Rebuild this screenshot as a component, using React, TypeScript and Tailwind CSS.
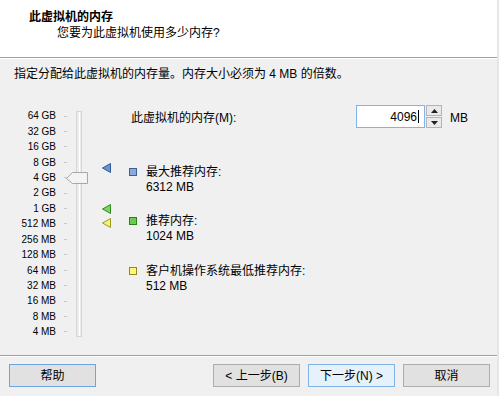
import React from "react";

const FONT = { fontFamily: '"Liberation Sans", "Noto Sans CJK SC", sans-serif' };

const scale = ["64 GB", "32 GB", "16 GB", "8 GB", "4 GB", "2 GB", "1 GB", "512 MB", "256 MB", "128 MB", "64 MB", "32 MB", "16 MB", "8 MB", "4 MB"];

function Tri({ fill, stroke, top }: { fill: string; stroke: string; top: number }) {
  return (
    <svg className="absolute left-[102px]" style={{ top }} width="10" height="10" viewBox="0 0 10 10">
      <polygon points="0.5,5 8.5,0.5 8.5,9.5" fill={fill} stroke={stroke} strokeWidth="1" />
    </svg>
  );
}

function Btn({ children, variant }: { children: React.ReactNode; variant?: "focus" | "hover" }) {
  const cls =
    variant === "hover"
      ? "border-[#7eb4ea] bg-[#e5f1fb]"
      : variant === "focus"
      ? "border-[#6fa4e0] bg-[#e1e1e1]"
      : "border-[#adadad] bg-[#e1e1e1]";
  return (
    <div className={`w-[87px] h-[23px] border ${cls} flex items-center justify-center text-[12px] text-black`}>
      {children}
    </div>
  );
}

function Legend({ color, border, title, value }: { color: string; border: string; title: string; value: string }) {
  return (
    <div className="flex">
      <div className="w-[17px] pt-[3px]">
        <div className="w-[8px] h-[8px] border" style={{ background: color, borderColor: border }} />
      </div>
      <div className="leading-[15px] text-[12px]">
        <div>{title}</div>
        <div>{value}</div>
      </div>
    </div>
  );
}

export default function App() {
  return (
    <div className="w-[499px] h-[396px] bg-[#f0f0f0] flex flex-col text-black border-r-2 border-r-[#e6e6e6]" style={FONT}>
      <div className="h-[58px] bg-white border-b border-[#a0a0a0] shrink-0">
        <div className="pl-[29px] pt-[9px] text-[12px] font-bold leading-[16px]">此虚拟机的内存</div>
        <div className="pl-[57px] pt-[0px] text-[12px] leading-[16px]">您要为此虚拟机使用多少内存?</div>
      </div>
      <div className="flex-1 border-t border-white">
        <div className="pl-[14px] pt-[7px] text-[12px] leading-[16px]">指定分配给此虚拟机的内存量。内存大小必须为 4 MB 的倍数。</div>
        <div className="flex mt-[23px]">
          <div className="relative w-[129px] h-[240px] flex">
            <div className="w-[56px] pt-[3.3px] text-right text-[10px]">
              {scale.map((s) => (
                <div key={s} className="h-[15.43px] leading-[15.43px]">{s}</div>
              ))}
            </div>
            <div className="w-[4px] ml-[8px] pt-[3.3px]">
              {scale.map((s) => (
                <div key={s} className="h-[15.43px] flex items-center">
                  <div className="w-[3px] h-px bg-[#c8c8c8]" />
                </div>
              ))}
            </div>
            <div className="ml-[8px] mt-[6px] w-[6px] h-[226px] border border-[#d6d6d6] bg-[#ececec] flex justify-center">
              <div className="w-px h-full bg-white" />
            </div>
            <svg className="absolute left-[66px] top-[67px]" width="23" height="13" viewBox="0 0 23 13">
              <polygon points="0.5,6.5 6.5,0.5 21.5,0.5 21.5,11.5 6.5,11.5" fill="#f3f3f3" stroke="#a8a8a8" strokeWidth="1" />
            </svg>
            <Tri fill="#6f95cc" stroke="#2d5b95" top={58} />
            <Tri fill="#7fd36b" stroke="#2f8a1f" top={99} />
            <Tri fill="#f4f27e" stroke="#9a9a20" top={113} />
          </div>
          <div className="flex flex-col">
            <div className="flex items-center h-[23px]">
              <div className="w-[227px] pl-[2px] text-[12px] pt-[2px]">此虚拟机的内存(M):</div>
              <div className="w-[69px] h-[23px] border border-[#7eb4ea] bg-white flex items-center justify-end pr-[5px] text-[12px]">
                4096<span className="inline-block w-px h-[13px] bg-black ml-[1px]" />
              </div>
              <div className="ml-[1px] w-[16px] h-[23px] flex flex-col gap-[1px]">
                <div className="h-[11px] border border-[#b4b4b4] bg-[#eaeaea] flex items-center justify-center">
                  <svg width="7" height="4" viewBox="0 0 7 4"><polygon points="0,4 3.5,0 7,4" fill="#222" /></svg>
                </div>
                <div className="h-[11px] border border-[#b4b4b4] bg-[#eaeaea] flex items-center justify-center">
                  <svg width="7" height="4" viewBox="0 0 7 4"><polygon points="0,0 3.5,4 7,0" fill="#222" /></svg>
                </div>
              </div>
              <div className="ml-[8px] text-[12px] pt-[2px]">MB</div>
            </div>
            <div className="mt-[37px] flex flex-col">
              <Legend color="#8ea9d6" border="#3b5f96" title="最大推荐内存:" value="6312 MB" />
              <div className="h-[19px]" />
              <Legend color="#6ccb4a" border="#2c7d1c" title="推荐内存:" value="1024 MB" />
              <div className="h-[20px]" />
              <Legend color="#fbf57a" border="#8f8a20" title="客户机操作系统最低推荐内存:" value="512 MB" />
            </div>
          </div>
        </div>
      </div>
      <div className="h-[41px] shrink-0 border-t border-[#a0a0a0] shadow-[inset_0_1px_0_#ffffff] flex items-start pt-[8px] pl-[9px] pr-[7px]">
        <Btn variant="focus">帮助</Btn>
        <div className="flex-1" />
        <div className="flex gap-[8px]">
          <Btn>&lt; 上一步(B)</Btn>
          <Btn variant="hover">下一步(N) &gt;</Btn>
          <Btn>取消</Btn>
        </div>
      </div>
    </div>
  );
}
